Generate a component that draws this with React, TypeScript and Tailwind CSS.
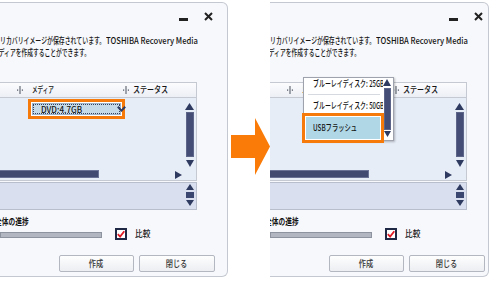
import React from "react";

const FONT = "font-['Noto_Sans_CJK_JP','Noto_Sans',sans-serif]";

function Sq({ box, inner, children }: { box: string; inner: string; children: React.ReactNode }) {
  return (
    <span className={`inline-block shrink-0 whitespace-nowrap ${box}`}>
      <span className={`inline-block ${inner}`}>{children}</span>
    </span>
  );
}

function Up({ w = 9, h = 7 }: { w?: number; h?: number }) {
  return (
    <svg width={w} height={h} viewBox={`0 0 ${w} ${h}`} className="block shrink-0">
      <polygon points={`${w / 2},0 ${w},${h} 0,${h}`} fill="#2e3a60" />
    </svg>
  );
}

function Down({ w = 9, h = 7 }: { w?: number; h?: number }) {
  return (
    <svg width={w} height={h} viewBox={`0 0 ${w} ${h}`} className="block shrink-0">
      <polygon points={`0,0 ${w},0 ${w / 2},${h}`} fill="#2e3a60" />
    </svg>
  );
}

function Right() {
  return (
    <svg width="7" height="8" viewBox="0 0 7 8" className="block shrink-0">
      <polygon points="0,0 7,4 0,8" fill="#2e3a60" />
    </svg>
  );
}

function Sep({ className }: { className: string }) {
  return (
    <svg width="6" height="8" viewBox="0 0 6 8" className={`block shrink-0 ${className}`}>
      <rect x="2.5" y="0" width="1" height="8" fill="#4a505c" />
      <rect x="0" y="3.5" width="1.2" height="1.2" fill="#4a505c" />
      <rect x="4.8" y="3.5" width="1.2" height="1.2" fill="#4a505c" />
    </svg>
  );
}

function Combo() {
  return (
    <div className="ml-[28px] mt-[1px] h-[20px] w-[97px] border-[3px] border-[#f57a0a] bg-white p-[1px]">
      <div className="h-full border border-[#9fb3c8] bg-[#c6dbe9]">
        <div className="flex h-full items-center border border-dotted border-[#34425f] pl-[7px]">
          <Sq box="w-[60px] text-[8.5px] leading-[10px]" inner="origin-left scale-x-[0.95]">
            DVD:4.7GB
          </Sq>
          <svg width="9" height="6" viewBox="0 0 9 6" className="ml-[16px] block shrink-0">
            <path d="M0.8 0.8 L4.5 4.6 L8.2 0.8" stroke="#2f3d63" strokeWidth="2" fill="none" />
          </svg>
        </div>
      </div>
    </div>
  );
}

function Popup() {
  return (
    <div className="absolute left-[33px] top-[74px] flex h-[64px] w-[91px] border border-[#9da2ac] bg-white shadow-[1px_1px_2px_rgba(0,0,0,0.25)]">
      <div className="relative flex-1 overflow-hidden pl-[9px]">
        <div className="h-[12px] text-[9px] leading-[12px]">
          <Sq box="w-[80px]" inner="origin-left scale-x-[0.66]">ブルーレイディスク: 25GB</Sq>
        </div>
        <div className="-ml-[5px] mt-[4px] h-px w-[72px] bg-[#d6d9df]" />
        <div className="mt-[5px] h-[12px] text-[9px] leading-[12px]">
          <Sq box="w-[80px]" inner="origin-left scale-x-[0.66]">ブルーレイディスク: 50GB</Sq>
        </div>
      </div>
      <div className="mr-[2px] flex w-[8px] flex-col items-center pt-[1px]">
        <Up w={8} h={7} />
        <div className="mt-[2px] h-[42px] w-[7px] border border-[#5d6688] bg-[#434d75]" />
        <div className="mt-[1px]">
          <Down w={7} h={6} />
        </div>
      </div>
      <div className="absolute -left-[2px] top-[35px] h-[30px] w-[82px] border-[3px] border-[#f57a0a] bg-white p-[1px]">
        <div className="flex h-full items-center bg-[#afd7e5] pl-[7px] text-[9px] leading-[12px]">
          <Sq box="w-[50px]" inner="origin-left scale-x-[0.7]">USBフラッシュ</Sq>
        </div>
      </div>
    </div>
  );
}

function Win({ width, open }: { width: string; open: boolean }) {
  return (
    <div
      className={`relative mt-[2px] h-[275px] shrink-0 overflow-hidden rounded-r-[6px] border-y border-r border-[#c4c8d0] bg-[#f7f8fb] font-medium text-[#141414] ${width} ${FONT}`}
    >
      <div className="flex flex-col">
        <div className="flex h-[27px] items-start">
          <div className="ml-[179px] mt-[15px] h-[2.5px] w-[9px] bg-[#222]" />
          <svg className="ml-[16px] mt-[9px] block shrink-0" width="9" height="9" viewBox="0 0 9 9">
            <path d="M1 1L8 8M8 1L1 8" stroke="#222" strokeWidth="2" />
          </svg>
        </div>

        <div className="mt-[5px] text-[9px] leading-[12px]">
          <div className="flex">
            <Sq box="w-[106px]" inner="origin-left scale-x-[0.655]">リカバリイメージが保存されています。</Sq>
            <Sq box="w-[90px]" inner="origin-left scale-x-[0.85]">TOSHIBA Recovery Media</Sq>
          </div>
          <div className="-ml-[7px] flex">
            <Sq box="w-[110px]" inner="origin-left scale-x-[0.64]">メディアを作成することができます。</Sq>
          </div>
        </div>

        <div className="mt-[23px] flex h-[16px] w-[197px] items-center border-y border-r border-[#c5c9d2] bg-gradient-to-b from-[#fcfcfe] to-[#eceff5] text-[9px] leading-[12px]">
          <Sep className="ml-[17px]" />
          <Sq box="ml-[9px] w-[24px]" inner="origin-left scale-x-[0.62]">メディア</Sq>
          <Sep className="ml-[67px]" />
          <Sq box="ml-[4px] w-[40px]" inner="origin-left scale-x-[0.78]">ステータス</Sq>
        </div>

        <div className="flex h-[83px] w-[197px] flex-col border-b border-r border-[#c5c9d2] bg-[#e7edf7]">
          <div className="flex h-[72px]">
            <div className="flex-1">{!open && <Combo />}</div>
            <div className="mr-[2px] flex w-[9px] flex-col items-center pt-[5px]">
              <Up />
              <div className="mt-[2px] h-[45px] w-[8px] border border-[#5d6688] bg-[#434d75]" />
              <div className="mt-[3px]">
                <Down w={8} h={7} />
              </div>
            </div>
          </div>
          <div className="flex h-[10px] items-start">
            <div className="h-[8px] w-[99px] border-y border-r border-[#6a7396] bg-[#414b72]" />
            <div className="ml-[76px] mt-[1px]">
              <Right />
            </div>
          </div>
        </div>

        <div className="mt-[1px] flex h-[28px] w-[197px] justify-end border-y border-r border-[#b8becb] bg-[#d9dfee]">
          <div className="mr-[2px] flex w-[9px] flex-col items-center pt-[1px]">
            <Up w={8} h={6} />
            <div className="mt-[2px] h-[6px] w-[8px] bg-[#3a4570]" />
            <div className="mt-[2px]">
              <Down w={8} h={6} />
            </div>
          </div>
        </div>

        <div className="mt-[6px] flex h-[12px] text-[9px] font-bold leading-[12px]">
          <Sq box="-ml-[5px] w-[40px]" inner="origin-left scale-x-[0.75]">全体の進捗</Sq>
        </div>

        <div className="flex h-[12px] items-start">
          <div className="mt-[4px] h-[6px] w-[102px] border border-[#8e949f] bg-[#b1b6c1]" />
          <div className="ml-[13px] flex h-[12px] w-[12px] items-center justify-center border-2 border-[#1f2945] bg-white">
            <svg width="8" height="8" viewBox="0 0 8 8" className="block">
              <path d="M0.8 4.2 L3.1 6.6 L7.3 1.2" stroke="#e01b24" strokeWidth="1.8" fill="none" />
            </svg>
          </div>
          <Sq box="ml-[8px] w-[20px] text-[9px] leading-[12px]" inner="origin-left scale-x-[0.85]">比較</Sq>
        </div>

        <div className="ml-[59px] mt-[15px] flex gap-[5px] text-[9px] leading-[12px] text-[#333]">
          <div className="flex h-[17px] w-[75px] items-center justify-center rounded-[2px] border border-[#b3b7c0] bg-gradient-to-b from-[#fefefe] to-[#eceef2]">
            <span className="inline-block scale-x-[0.8]">作成</span>
          </div>
          <div className="flex h-[17px] w-[76px] items-center justify-center rounded-[2px] border border-[#b3b7c0] bg-gradient-to-b from-[#fefefe] to-[#eceef2]">
            <span className="inline-block scale-x-[0.8]">閉じる</span>
          </div>
        </div>
      </div>
      {open && <Popup />}
    </div>
  );
}

export default function App() {
  return (
    <div className="flex h-[282px] w-[500px] overflow-hidden bg-white">
      <Win width="w-[228px]" open={false} />
      <div className="relative z-10 w-[42px] shrink-0 pt-[118px]">
        <svg width="42" height="57" viewBox="0 0 42 57" className="block">
          <polygon points="3,17 27,17 27,0 42,28.5 27,57 27,40 3,40" fill="#fa7b08" />
        </svg>
      </div>
      <Win width="w-[219px]" open={true} />
    </div>
  );
}
